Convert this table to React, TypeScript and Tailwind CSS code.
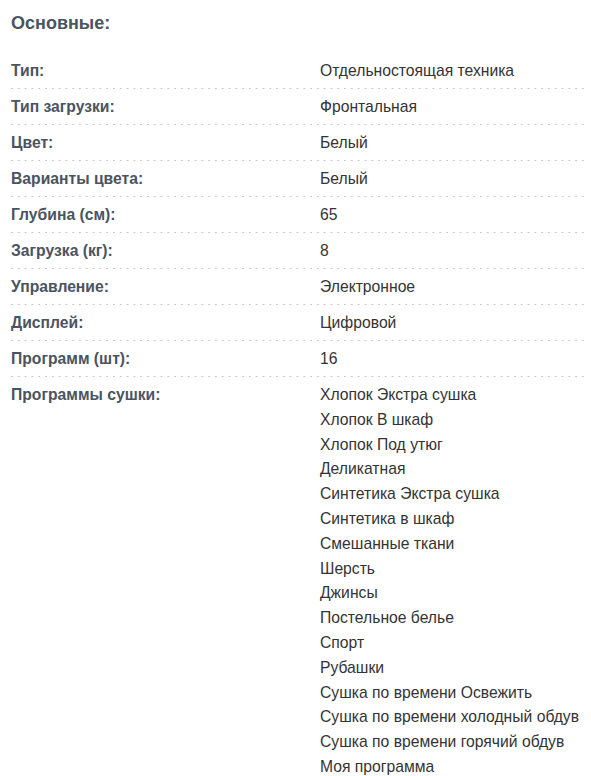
import React from 'react';

const specs = [
  { label: 'Тип:', value: 'Отдельностоящая техника' },
  { label: 'Тип загрузки:', value: 'Фронтальная' },
  { label: 'Цвет:', value: 'Белый' },
  { label: 'Варианты цвета:', value: 'Белый' },
  { label: 'Глубина (см):', value: '65' },
  { label: 'Загрузка (кг):', value: '8' },
  { label: 'Управление:', value: 'Электронное' },
  { label: 'Дисплей:', value: 'Цифровой' },
  { label: 'Программ (шт):', value: '16' },
];

const programs = [
  'Хлопок Экстра сушка',
  'Хлопок В шкаф',
  'Хлопок Под утюг',
  'Деликатная',
  'Синтетика Экстра сушка',
  'Синтетика в шкаф',
  'Смешанные ткани',
  'Шерсть',
  'Джинсы',
  'Постельное белье',
  'Спорт',
  'Рубашки',
  'Сушка по времени Освежить',
  'Сушка по времени холодный обдув',
  'Сушка по времени горячий обдув',
  'Моя программа',
];

const App: React.FC = () => {
  return (
    <div className="w-[591px] h-[776px] overflow-hidden bg-white font-['Liberation_Sans',Arial,sans-serif]">
      <div className="pl-[11px] pr-[3px]">
        {/* Section title */}
        <h2 className="pt-[11px] text-[18px] leading-[24px] font-bold text-[#4a5461]">Основные:</h2>

        <div className="mt-[18px]">
          {specs.map((row, idx) => (
            <div key={idx}>
              <div className="flex pt-[6px] pb-[5px] text-[15.7px] leading-[24px]">
                <div className="w-[309px] shrink-0 font-bold text-[#4a5461]">{row.label}</div>
                <div className="text-[#333333]">{row.value}</div>
              </div>
              <div className="h-px bg-[linear-gradient(to_right,#c9c9c9_2px,transparent_2px)] bg-[length:6.8px_1px] bg-repeat-x" />
            </div>
          ))}

          {/* Drying programs list */}
          <div className="flex pt-[6px] text-[15.7px] leading-[24.8px]">
            <div className="w-[309px] shrink-0 font-bold text-[#4a5461]">Программы сушки:</div>
            <ul className="text-[#333333]">
              {programs.map((p, idx) => (
                <li key={idx}>{p}</li>
              ))}
            </ul>
          </div>
        </div>
      </div>
    </div>
  );
};

export default App;
